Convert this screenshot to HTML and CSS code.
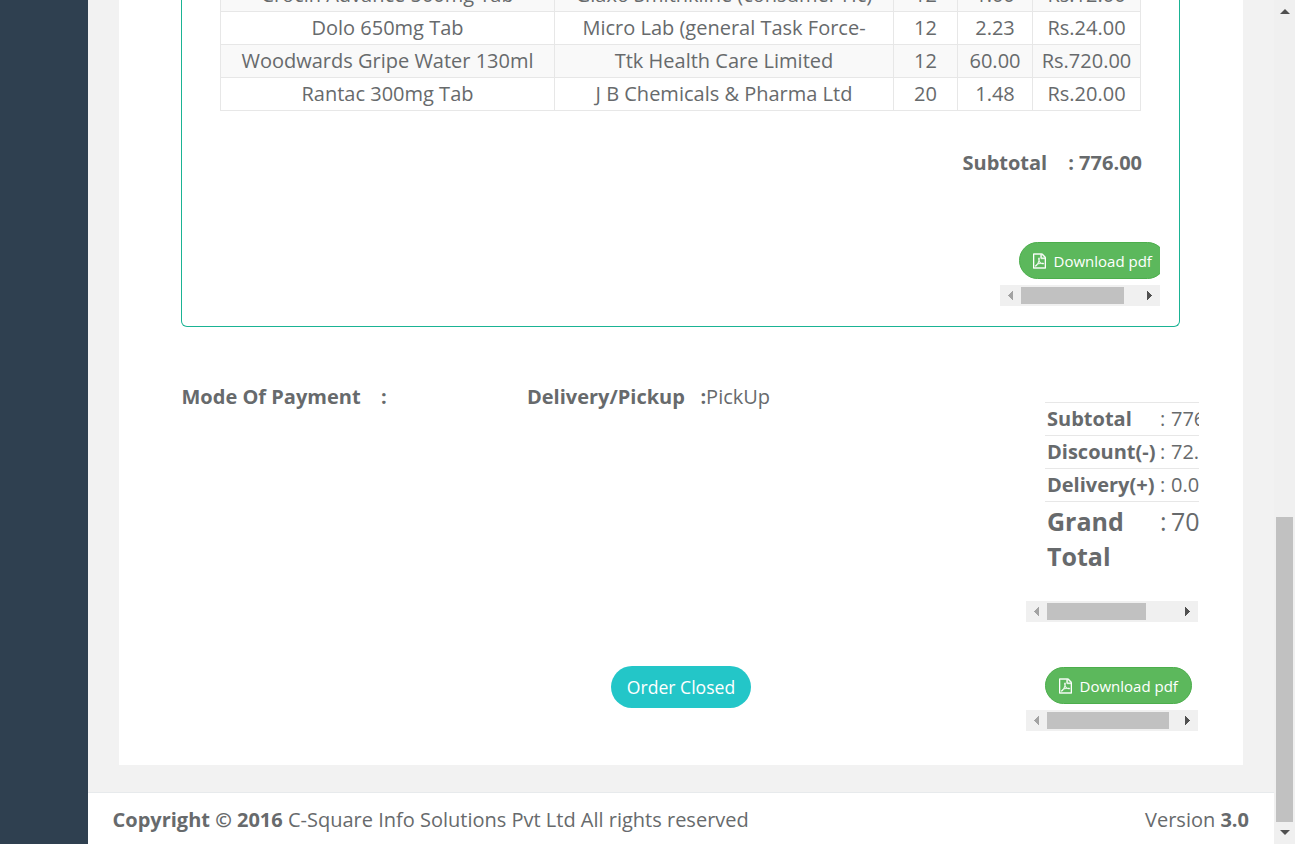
FILE: index.html
```html
<!DOCTYPE html>
<html lang="en">
<head>
<meta charset="utf-8">
<title>Order Details</title>
<link rel="stylesheet" href="styles.css">
</head>
<body>
<svg class="defs" width="0" height="0">
  <symbol id="pdf" viewBox="0 0 1536 1792"><path fill="currentColor" stroke="currentColor" stroke-width="50" d="M1468 380q28 28 48 76t20 88v1152q0 40-28 68t-68 28H96q-40 0-68-28t-28-68V96q0-40 28-68T96 0h896q40 0 88 20t76 48zm-444-244v376h376q-10-29-22-41l-313-313q-12-12-41-22zm384 1528V640H992q-40 0-68-28t-28-68V128H128v1536h1280zM894 1071q33 26 84 56 59-7 117-7 147 0 177 49 16 22 2 52 0 1-1 2l-2 2v1q-6 38-71 38-48 0-115-20t-130-53q-221 24-392 83-153 262-242 262-15 0-28-7l-24-12q-1-1-6-5-10-10-6-36 9-40 56-91.500t132-96.500q14-9 23 6 2 2 2 4 52-85 107-197 68-136 104-262-24-82-30.500-159.500t6.500-127.500q11-40 42-40h22q23 0 35 15 18 21 9 68-2 6-4 8 1 3 1 8v30q-2 123-14 192 55 164 146 238zM318 1482q52-24 137-158-51 40-87.500 84t-49.500 74zM716 562q-15 42-2 132 1-7 7-44 0-3 7-43 1-4 4-8-1-1-1-2t-1-2-1-3q-1-22-13-36 0 1-1 2v4zM592 1223q135-54 284-81-2-1-13-9.500t-16-13.500q-76-67-127-176-27 86-83 197-30 56-45 83zm646-16q-24-24-140-24 76 28 124 28 14 0 18-1 0-1-2-3z"/></symbol>
  <symbol id="arrow-left" viewBox="0 0 5 9"><path fill="currentColor" d="M5 0v9H4V8H3V7H2V6H1V5H0V4h1V3h1V2h1V1h1V0z"/></symbol>
  <symbol id="arrow-right" viewBox="0 0 5 9"><path fill="currentColor" d="M0 0v9h1V8h1V7h1V6h1V5h1V4H4V3H3V2H2V1H1V0z"/></symbol>
</svg>
<div class="shell">
  <aside class="sidebar"></aside>
  <div class="page">
    <main class="card">
      <section class="panel">
        <table class="items">
          <colgroup><col class="c-name"><col class="c-maker"><col class="c-qty"><col class="c-rate"><col class="c-total"></colgroup>
          <tr class="odd"><td>Crocin Advance 500mg Tab</td><td>Glaxo Smithkline (consumer Hc)</td><td>12</td><td>1.00</td><td>Rs.12.00</td></tr>
          <tr><td>Dolo 650mg Tab</td><td>Micro Lab (general Task Force-</td><td>12</td><td>2.23</td><td>Rs.24.00</td></tr>
          <tr class="odd"><td>Woodwards Gripe Water 130ml</td><td>Ttk Health Care Limited</td><td>12</td><td>60.00</td><td>Rs.720.00</td></tr>
          <tr><td>Rantac 300mg Tab</td><td>J B Chemicals &amp; Pharma Ltd</td><td>20</td><td>1.48</td><td>Rs.20.00</td></tr>
        </table>
        <div class="subtotal"><span>Subtotal</span><span>: 776.00</span></div>
        <div class="scroller panel-download">
          <div class="viewport"><a class="btn-pdf"><svg><use href="#pdf"/></svg>Download pdf</a></div>
          <div class="hbar"><svg class="dim"><use href="#arrow-left"/></svg><i class="thumb t103"></i><svg class="end"><use href="#arrow-right"/></svg></div>
        </div>
      </section>
      <section class="details">
        <div class="mode"><b>Mode Of Payment</b><b>:</b></div>
        <div class="delivery"><b>Delivery/Pickup</b><b>:</b><span>PickUp</span></div>
        <div class="scroller totals">
          <div class="viewport">
            <div class="line"><b>Subtotal</b><span>:</span><span>776.00</span></div>
            <div class="line"><b>Discount(-)</b><span>:</span><span>72.00</span></div>
            <div class="line"><b>Delivery(+)</b><span>:</span><span>0.00</span></div>
            <div class="line grand"><b>Grand Total</b><span>:</span><span>704.00</span></div>
          </div>
          <div class="hbar"><svg class="dim"><use href="#arrow-left"/></svg><i class="thumb t99"></i><svg class="end"><use href="#arrow-right"/></svg></div>
        </div>
      </section>
      <section class="actions">
        <a class="btn-closed">Order Closed</a>
        <div class="scroller">
          <div class="viewport"><a class="btn-pdf"><svg><use href="#pdf"/></svg>Download pdf</a></div>
          <div class="hbar"><svg class="dim"><use href="#arrow-left"/></svg><i class="thumb t122"></i><svg class="end"><use href="#arrow-right"/></svg></div>
        </div>
      </section>
    </main>
    <footer class="footer">
      <div><b>Copyright © 2016</b> C-Square Info Solutions Pvt Ltd All rights reserved</div>
      <div>Version <b>3.0</b></div>
    </footer>
  </div>
  <div class="vbar"><i class="up"></i><i class="vthumb"></i><i class="down"></i></div>
</div>
</body>
</html>
```
FILE: styles.css
```css
* { box-sizing: border-box; }
body {
  margin: 0;
  height: 844px;
  overflow: hidden;
  font: 20px/28px "Open Sans", sans-serif;
  color: #676a6c;
}
.defs { display: block; }
.shell { display: flex; height: 844px; background: #f2f2f2; }
.sidebar { flex: 0 0 88px; background: #2f4050; }
.page { flex: 1; display: flex; flex-direction: column; justify-content: space-between; }
.card { height: 765px; margin: 0 31px; padding-left: 62px; background: #fff; overflow: hidden; }

.panel {
  display: flow-root;
  width: 999px;
  height: 327px;
  padding: 0 38px;
  border: 1px solid #1ab394;
  border-top: 0;
  border-radius: 0 0 6px 6px;
}
.items {
  width: 921px;
  margin-top: -22px;
  border-collapse: collapse;
  table-layout: fixed;
  text-align: center;
  white-space: nowrap;
}
.items td { height: 33px; padding: 0; border: 1px solid #e7e7e7; }
.items .odd { background: #f9f9f9; }
.c-name { width: 334px; }
.c-maker { width: 339px; }
.c-qty { width: 64px; }
.c-rate { width: 75px; }
.c-total { width: 108px; }
.subtotal {
  display: flex;
  justify-content: flex-end;
  gap: 21px;
  width: 922px;
  margin-top: 38px;
  font-weight: 700;
}

.scroller { width: 172px; }
.viewport { overflow: hidden; padding-left: 19px; }
.panel-download { width: 160px; margin: 65px 0 0 780px; }
.hbar {
  display: flex;
  align-items: center;
  height: 21px;
  margin-top: 6px;
  padding: 0 8px;
  background: #f0f0f0;
  color: #505050;
}
.hbar svg { width: 5px; height: 9px; }
.hbar .dim { color: #a3a3a3; }
.hbar .end { margin-left: auto; }
.thumb { height: 17px; margin-left: 8px; background: #c1c1c1; }
.t103 { width: 103px; }
.t99 { width: 99px; }
.t122 { width: 122px; }

.btn-pdf {
  display: flex;
  align-items: center;
  width: 147px;
  height: 37px;
  padding-left: 13px;
  border: 1px solid #4cae4c;
  border-radius: 19px;
  background: #5cb85c;
  color: #fff;
  font-size: 15px;
  white-space: nowrap;
}
.btn-pdf svg { width: 13px; height: 16px; margin-right: 7.5px; overflow: visible; }

.details { display: grid; grid-template-columns: 346px 499px 173px; height: 339px; }
.mode, .delivery { display: flex; padding-top: 56px; }
.mode { gap: 20.5px; padding-left: 0.5px; }
.delivery b + b { margin-left: 15.5px; }
.totals { padding-top: 75px; }
.totals .viewport { width: 173px; height: 193px; }
.line {
  display: grid;
  grid-template-columns: 113px 11px 100px;
  width: 230px;
  height: 33px;
  padding: 2px 0 0 2px;
  border-top: 1px solid #e7e7e7;
}
.grand { height: 80px; font-size: 25px; line-height: 35px; }
.actions { display: flex; }
.btn-closed {
  width: 140px;
  height: 42px;
  margin-right: 275px;
  margin-left: 430px;
  border-radius: 21px;
  background: #23c6c8;
  color: #fff;
  font-size: 17.6px;
  line-height: 42px;
  text-align: center;
}
.actions .scroller { padding-top: 1px; }

.footer {
  display: flex;
  justify-content: space-between;
  height: 52px;
  padding: 13px 25px 0 24.5px;
  border-top: 1px solid #e7eaec;
  background: #fff;
}

.vbar {
  flex: 0 0 21px;
  display: flex;
  flex-direction: column;
  align-items: center;
  background: #f0f0f0;
  padding: 9px 0;
}
.up, .down { border: 5px solid transparent; height: 0; }
.up { border-top: 0; border-bottom-color: #505050; }
.down { border-bottom: 0; border-top-color: #505050; margin-top: auto; }
.vthumb { width: 17px; height: 305px; margin-top: 503px; background: #c1c1c1; }
```
